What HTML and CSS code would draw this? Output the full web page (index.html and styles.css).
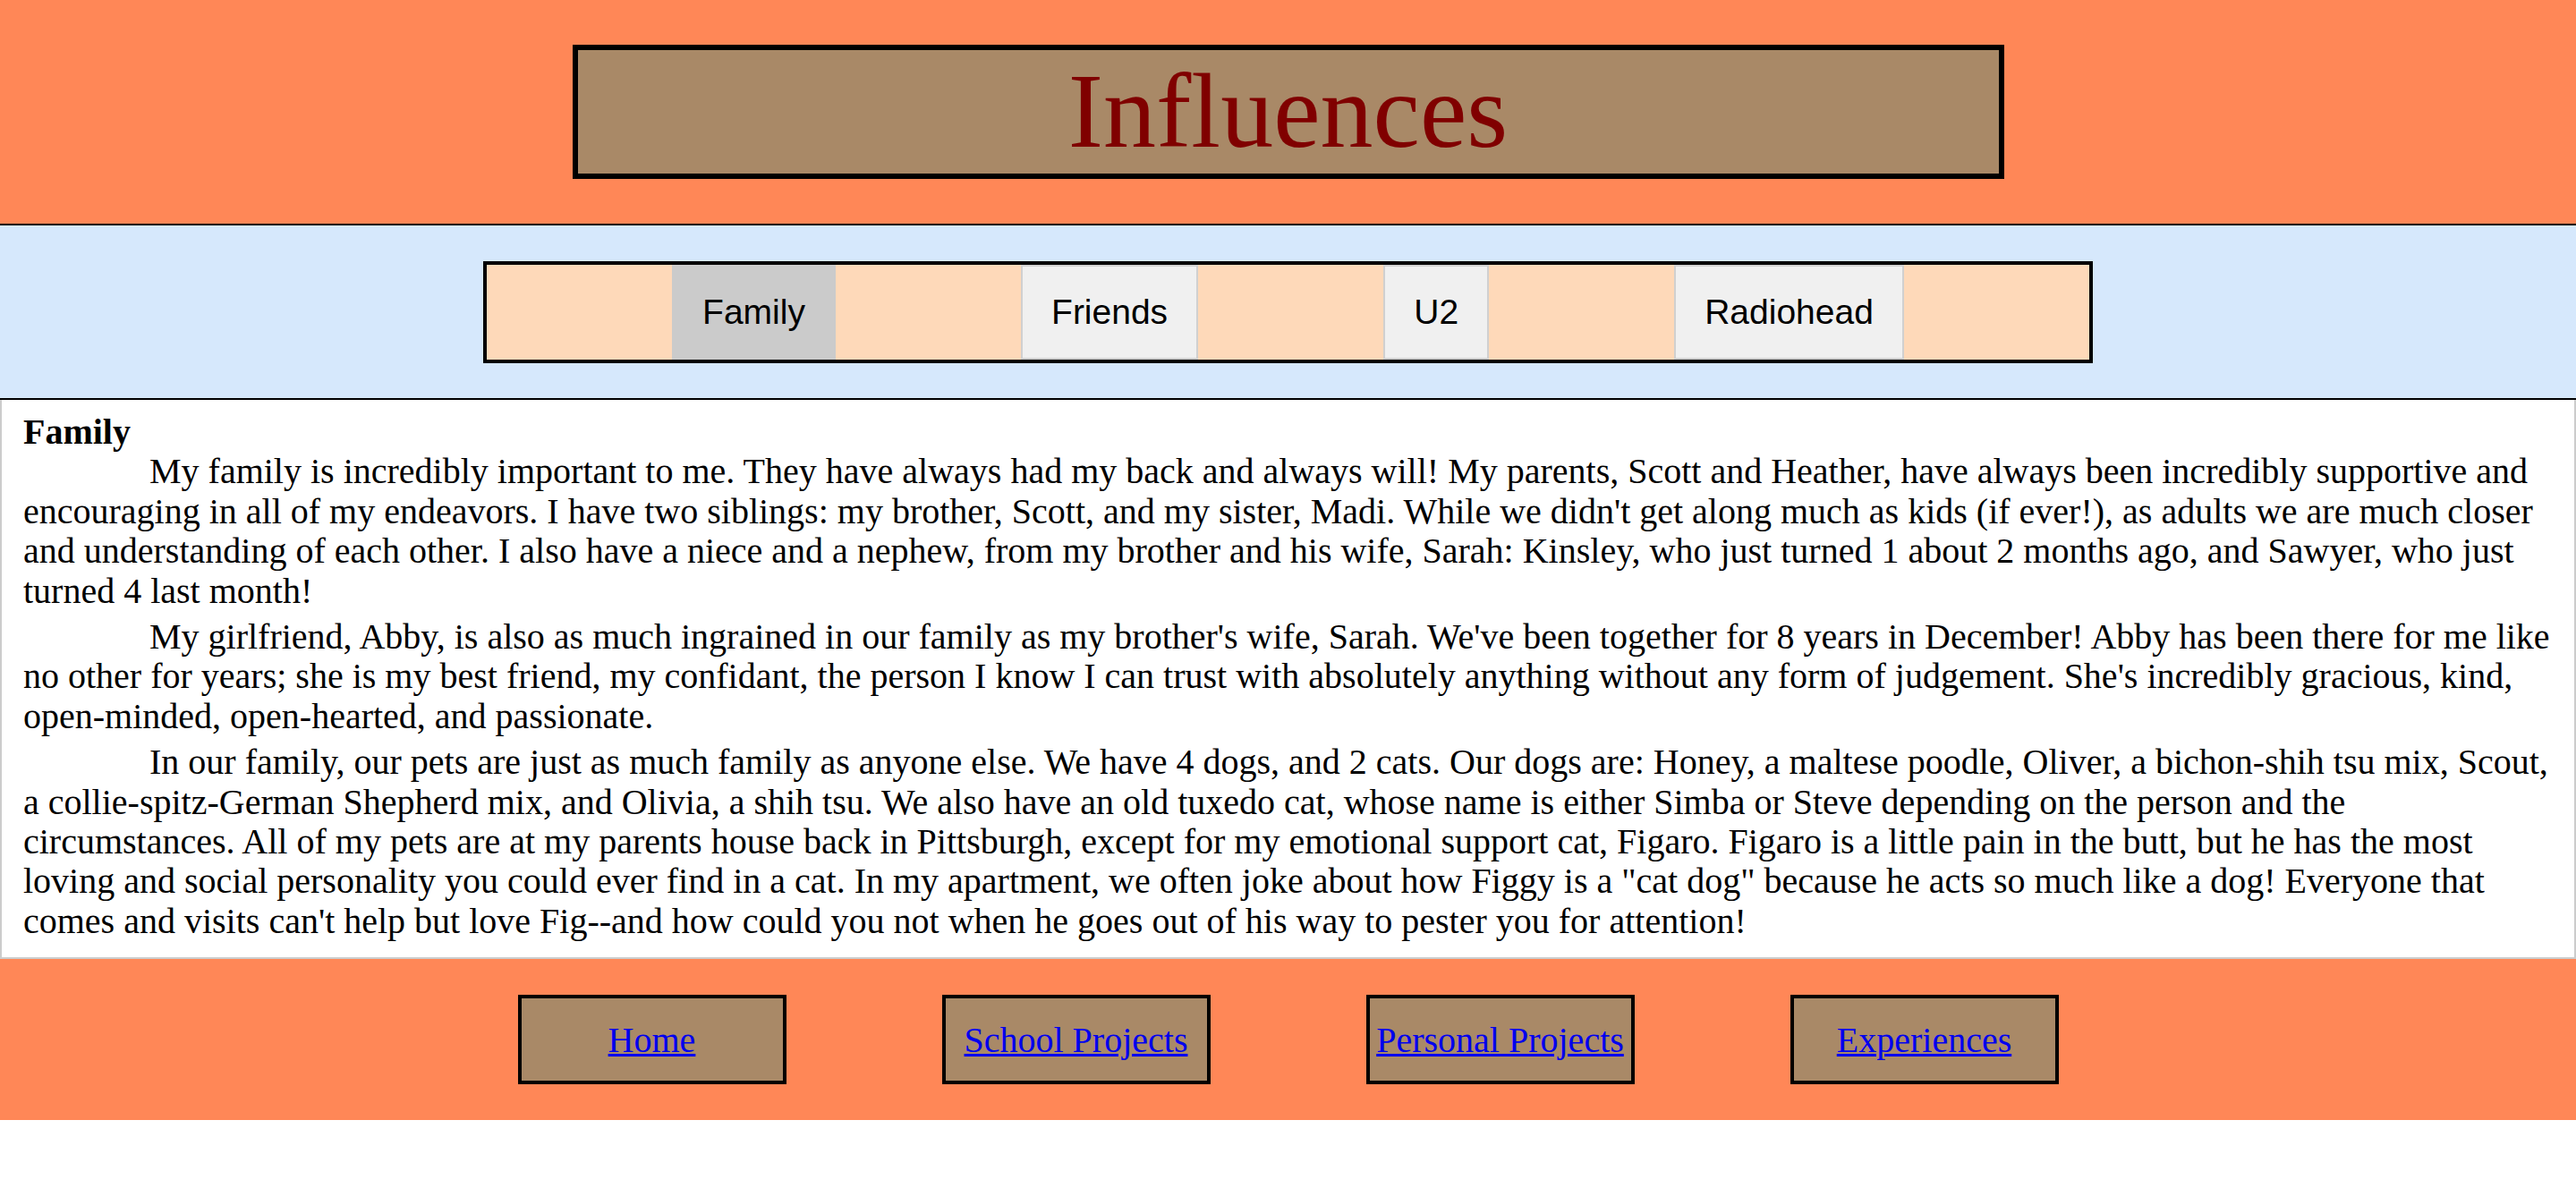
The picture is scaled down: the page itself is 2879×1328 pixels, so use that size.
FILE: index.html
```html
<!DOCTYPE html>
<html lang="en">
<head>
<meta charset="utf-8">
<title>Influences</title>
<link rel="stylesheet" href="styles.css">
</head>
<body>
<header class="top">
  <div class="title-box"><h1 class="title">Influences</h1></div>
</header>
<nav class="band">
  <div class="tabs">
    <button class="tab active">Family</button>
    <button class="tab">Friends</button>
    <button class="tab">U2</button>
    <button class="tab">Radiohead</button>
  </div>
</nav>
<main class="content">
  <div class="content-title">Family</div>
  <p class="para">My family is incredibly important to me. They have always had my back and always will! My parents, Scott and Heather, have always been incredibly supportive and encouraging in all of my endeavors. I have two siblings: my brother, Scott, and my sister, Madi. While we didn't get along much as kids (if ever!), as adults we are much closer and understanding of each other. I also have a niece and a nephew, from my brother and his wife, Sarah: Kinsley, who just turned 1 about 2 months ago, and Sawyer, who just turned 4 last month!</p>
  <p class="para">My girlfriend, Abby, is also as much ingrained in our family as my brother's wife, Sarah. We've been together for 8 years in December! Abby has been there for me like no other for years; she is my best friend, my confidant, the person I know I can trust with absolutely anything without any form of judgement. She's incredibly gracious, kind, open-minded, open-hearted, and passionate.</p>
  <p class="para">In our family, our pets are just as much family as anyone else. We have 4 dogs, and 2 cats. Our dogs are: Honey, a maltese poodle, Oliver, a bichon-shih tsu mix, Scout, a collie-spitz-German Shepherd mix, and Olivia, a shih tsu. We also have an old tuxedo cat, whose name is either Simba or Steve depending on the person and the circumstances. All of my pets are at my parents house back in Pittsburgh, except for my emotional support cat, Figaro. Figaro is a little pain in the butt, but he has the most loving and social personality you could ever find in a cat. In my apartment, we often joke about how Figgy is a "cat dog" because he acts so much like a dog! Everyone that comes and visits can't help but love Fig--and how could you not when he goes out of his way to pester you for attention!</p>
</main>
<footer class="foot">
  <a class="foot-btn" href="#">Home</a>
  <a class="foot-btn" href="#">School Projects</a>
  <a class="foot-btn" href="#">Personal Projects</a>
  <a class="foot-btn" href="#">Experiences</a>
</footer>
</body>
</html>
```

FILE: styles.css
```css
html, body {
  margin: 0;
  padding: 0;
  background: #ffffff;
}

body {
  font-family: "Liberation Serif", "Times New Roman", serif;
  color: #000;
}

.top {
  background: #ff8757;
  padding: 50px 0;
  display: flex;
  justify-content: center;
  border-bottom: 2px solid #000;
}

.title-box {
  width: 1588px;
  height: 138px;
  background: #a98967;
  border: 6px solid #000;
  display: flex;
  align-items: center;
  justify-content: center;
}

.title {
  margin: 0;
  font-weight: normal;
  font-size: 118px;
  line-height: 1;
  color: #800000;
}

.band {
  background: #d6e8fc;
  padding: 40px 0 39px;
  display: flex;
  justify-content: center;
  border-bottom: 2px solid #000;
}

.tabs {
  width: 1791px;
  height: 106px;
  background: #fed9b9;
  border: 4px solid #000;
  display: flex;
  justify-content: space-evenly;
  align-items: stretch;
}

.tab {
  font-family: "Liberation Sans", Arial, sans-serif;
  font-size: 39px;
  padding: 0 32px;
  margin: 0;
  background: #f0f0f0;
  border: 2px solid #d0d0d0;
  color: #000;
}

.tab.active {
  background: #cbcbcb;
  border-color: #cbcbcb;
}

.content {
  border: 2px solid #cccccc;
  border-top: none;
  padding: 14px 20px 18px 24px;
  font-size: 40px;
  line-height: 44.4px;
}

.content-title {
  font-weight: bold;
  font-size: 40px;
}

.para {
  margin: 0 0 7px;
  text-indent: 141px;
}

.para:last-child {
  margin-bottom: 0;
}

.foot {
  background: #ff8757;
  padding: 40px 0;
  display: flex;
  justify-content: center;
  gap: 174px;
}

.foot-btn {
  width: 292px;
  height: 92px;
  background: #a98967;
  border: 4px solid #000;
  display: flex;
  align-items: center;
  justify-content: center;
  font-size: 40px;
  color: #0000ee;
  text-decoration-thickness: 3px;
}
```
